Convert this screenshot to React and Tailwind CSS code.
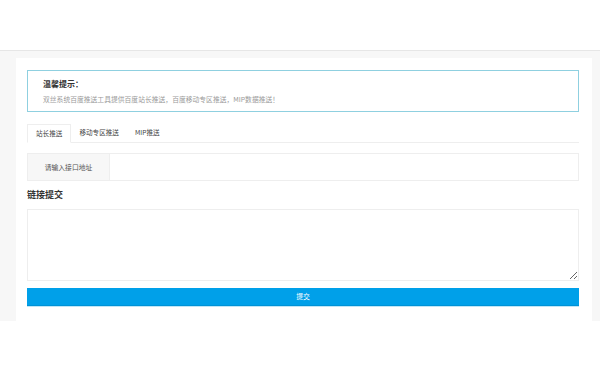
export default function App() {
  const font = { fontFamily: '"Noto Sans CJK SC", "Noto Sans", sans-serif' };
  return (
    <div className="w-[600px] h-[372px] bg-white overflow-hidden" style={font}>
      <div className="h-[51px] border-b border-[#e6e6e6] bg-white" />
      <div className="bg-[#f7f7f7] pl-[16px] pr-[8px] pt-[7px] h-[270px]">
        <div className="bg-white h-full pl-[11px] pr-[13px] pt-[12px]">
          <div className="h-[42px] border border-[#8fd0e0] pl-[15px] flex flex-col justify-center">
            <div className="text-[8px] leading-[12px] font-bold text-[#333]">温馨提示：</div>
            <div className="text-[6.8px] leading-[10px] text-[#9a9a9a] mt-[4px]">
              双丝系统百度推送工具提供百度站长推送，百度移动专区推送，MIP数据推送！
            </div>
          </div>
          <div className="mt-[12px] flex border-b border-[#eeeeee] h-[19px]">
            <div className="px-[8px] border border-[#eeeeee] border-b-white bg-white -mb-px text-[6.6px] text-[#444] flex items-center">
              站长推送
            </div>
            <div className="px-[7px] border border-transparent text-[6.6px] text-[#444] flex items-center">
              移动专区推送
            </div>
            <div className="px-[7px] border border-transparent text-[6.6px] text-[#444] flex items-center">
              MIP推送
            </div>
          </div>
          <div className="mt-[10px] h-[28px] flex border border-[#eeeeee]">
            <div className="w-[82px] bg-[#f7f7f7] border-r border-[#eeeeee] flex items-center justify-center text-[6.8px] text-[#555]">
              请输入接口地址
            </div>
            <input className="flex-1 outline-none px-2 text-[7px]" />
          </div>
          <div className="mt-[7px] h-[14px] flex items-center text-[9px] font-bold text-[#333] leading-[14px]">
            链接提交
          </div>
          <textarea className="mt-[7px] block w-full h-[72px] border border-[#eeeeee] outline-none text-[7px] p-1" />
          <button className="mt-[7px] block w-full h-[18px] bg-[#00a0e9] border-b border-[#0092d6] shadow-[0_1px_0_#bfe6f7] text-white text-[6.8px] leading-none">
            提交
          </button>
        </div>
      </div>
    </div>
  );
}
